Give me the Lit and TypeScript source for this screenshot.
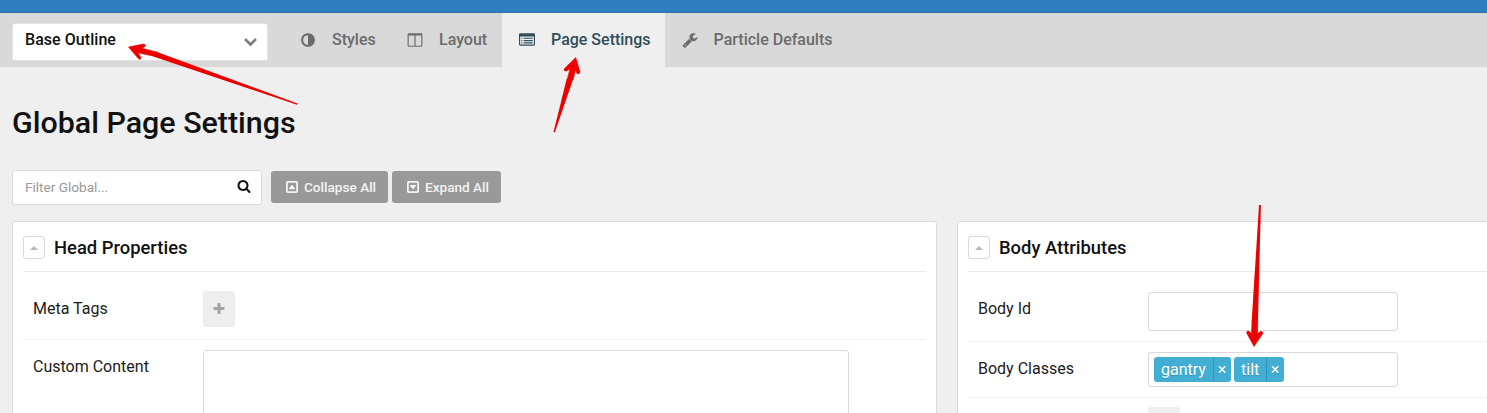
import { LitElement, html, css, svg } from "lit";
import { customElement, property } from "lit/decorators.js";

const GLYPHS: Record<string, string> = {
  adjust:
    "M896 1440v-1088q-148 0-273 73t-198 198-73 273 73 273 198 198 273 73zm768-544q0 209-103 385.5t-279.5 279.5-385.5 103-385.5-103-279.5-279.5-103-385.5 103-385.5 279.5-279.5 385.5-103 385.5 103 279.5 279.5 103 385.5z",
  columns:
    "M224 1536h608v-1152h-640v1120q0 13 9.5 22.5t22.5 9.5zm1376-32v-1120h-640v1152h608q13 0 22.5-9.5t9.5-22.5zm128-1216v1216q0 66-47 113t-113 47h-1344q-66 0-113-47t-47-113v-1216q0-66 47-113t113-47h1344q66 0 113 47t47 113z",
  list:
    "M384 1184v64q0 13-9.5 22.500t-22.500 9.500h-64q-13 0-22.500-9.500t-9.500-22.500v-64q0-13 9.500-22.500t22.500-9.500h64q13 0 22.500 9.500t9.500 22.500zm0-256v64q0 13-9.500 22.500t-22.500 9.500h-64q-13 0-22.500-9.500t-9.500-22.500v-64q0-13 9.500-22.500t22.500-9.500h64q13 0 22.500 9.500t9.500 22.500zm0-256v64q0 13-9.500 22.500t-22.500 9.500h-64q-13 0-22.500-9.500t-9.500-22.500v-64q0-13 9.500-22.500t22.500-9.500h64q13 0 22.500 9.500t9.500 22.500zm1152 512v64q0 13-9.500 22.500t-22.500 9.500h-960q-13 0-22.500-9.500t-9.500-22.500v-64q0-13 9.500-22.500t22.500-9.500h960q13 0 22.500 9.500t9.500 22.500zm0-256v64q0 13-9.500 22.500t-22.500 9.500h-960q-13 0-22.500-9.500t-9.500-22.500v-64q0-13 9.500-22.500t22.500-9.500h960q13 0 22.500 9.500t9.500 22.500zm0-256v64q0 13-9.500 22.500t-22.500 9.500h-960q-13 0-22.500-9.500t-9.500-22.500v-64q0-13 9.500-22.500t22.500-9.500h960q13 0 22.500 9.500t9.500 22.500zm128 704v-832q0-13-9.500-22.500t-22.500-9.500h-1472q-13 0-22.500 9.500t-9.500 22.500v832q0 13 9.500 22.500t22.500 9.500h1472q13 0 22.500-9.500t9.500-22.500zm128-1088v1088q0 66-47 113t-113 47h-1472q-66 0-113-47t-47-113v-1088q0-66 47-113t113-47h1472q66 0 113 47t47 113z",
  wrench:
    "M448 1472q0-26-19-45t-45-19-45 19-19 45 19 45 45 19 45-19 19-45zm644-420l-682 682q-37 37-90 37-52 0-91-37l-106-108q-38-36-38-90 0-53 38-91l681-681q39 98 114.5 173.500t173.500 114.500zm634-435q0 39-23 106-47 134-164.500 217.500t-258.500 83.500q-185 0-316.500-131.500t-131.500-316.500 131.500-316.500 316.500-131.500q58 0 121.500 16.500t107.500 46.500q16 11 16 28t-16 28l-293 169v224l193 107q5-3 79-48.500t135.500-81 70.500-35.500q15 0 23.500 10t8.500 25z",
  search:
    "M1216 832q0-185-131.500-316.500t-316.500-131.500-316.500 131.500-131.500 316.500 131.500 316.500 316.500 131.500 316.500-131.500 131.500-316.500zm512 832q0 52-38 90t-90 38q-54 0-90-38l-343-342q-179 124-399 124-143 0-273.500-55.500t-225-150-150-225-55.500-273.500 55.500-273.500 150-225 225-150 273.500-55.500 273.500 55.500 225 150 150 225 55.500 273.500q0 220-124 399l343 343q37 37 37 90z",
  plus:
    "M1600 736v192q0 40-28 68t-68 28h-416v416q0 40-28 68t-68 28h-192q-40 0-68-28t-28-68v-416h-416q-40 0-68-28t-28-68v-192q0-40 28-68t68-28h416v-416q0-40 28-68t68-28h192q40 0 68 28t28 68v416h416q40 0 68 28t28 68z",
  boxUp:
    "M1277 1129q-19 41-61 41h-640q-42 0-61-41-18-40 6-71l320-404q20-25 55-25t55 25l320 404q24 31 6 71zM350 128h1092q222 0 222 222v1092q0 222-222 222h-1092q-222 0-222-222v-1092q0-222 222-222zM410 350q-60 0-60 60v972q0 60 60 60h972q60 0 60-60v-972q0-60-60-60z",
  boxDown:
    "M515 673q19-41 61-41h640q42 0 61 41 18 40-6 71l-320 404q-20 25-55 25t-55-25l-320-404q-24-31-6-71zM350 128h1092q222 0 222 222v1092q0 222-222 222h-1092q-222 0-222-222v-1092q0-222 222-222zM410 350q-60 0-60 60v972q0 60 60 60h972q60 0 60-60v-972q0-60-60-60z",
};

@customElement("ui-icon")
class UiIcon extends LitElement {
  @property() name = "plus";
  static styles = css`
    :host { display: block; width: 16px; height: 16px; flex: none; }
    svg { display: block; width: 100%; height: 100%; fill: currentColor; fill-rule: evenodd; overflow: visible; }
  `;
  render() {
    return html`<svg viewBox="0 0 1792 1792">${svg`<path d=${GLYPHS[this.name]}></path>`}</svg>`;
  }
}

@customElement("settings-card")
class SettingsCard extends LitElement {
  @property() heading = "";
  static styles = css`
    :host { display: block; box-sizing: border-box; height: 300px; background: #fff; border: 1px solid #d9d9d9; border-radius: 3px; padding: 0 10px; }
    .head { display: flex; align-items: center; height: 50px; box-sizing: border-box; border-bottom: 1px solid #eaeaea; }
    .toggle { display: flex; align-items: center; justify-content: center; width: 22px; height: 23px; margin-top: 2px; box-sizing: border-box; border: 1px solid #d9d9d9; border-radius: 3px; }
    .tri { border: 4px solid transparent; border-top: 0; border-bottom-color: #b8b8b8; }
    h2 { margin: 3px 0 0 9px; font: 500 18.4px/24px Roboto, sans-serif; color: #111; white-space: nowrap; }
  `;
  render() {
    return html`<div class="head"><span class="toggle"><i class="tri"></i></span><h2>${this.heading}</h2></div><slot></slot>`;
  }
}

@customElement("app-root")
class AppRoot extends LitElement {
  static styles = css`
    :host { display: block; position: relative; width: 1487px; height: 413px; overflow: hidden; background: #efefef; font-family: Roboto, sans-serif; font-size: 16px; color: #111; }
    * { box-sizing: border-box; }
    .strip { height: 13px; background: #307dbf; border-bottom: 1px solid #2c72ae; }
    .bar { display: flex; height: 54px; background: #d9d9d9; padding-left: 12px; }
    .select { display: flex; justify-content: space-between; width: 256px; height: 38px; margin: 10px 17px 0 0; background: #fff; border: 1px solid #e3e3e3; border-radius: 3px; padding: 5px 10px 0 12px; font-weight: 500; line-height: 22px; letter-spacing: 0.05px; }
    .chev { width: 13px; height: 10px; margin-top: 7.5px; fill: none; stroke: #808080; stroke-width: 2.7; }
    .tab { display: flex; align-items: flex-start; padding-top: 17px; height: 54px; font-weight: 500; line-height: 20px; color: #6b6b6b; white-space: nowrap; }
    .tab ui-icon { margin-top: 1.5px; }
    .styles { width: 107px; padding-left: 15px; gap: 16px; }
    .layout { width: 110px; padding-left: 15px; gap: 16px; }
    .page { width: 163px; padding-left: 17px; gap: 16px; background: #efefef; color: #314d59; }
    .particle { padding-left: 16.5px; gap: 16px; }
    h1 { margin: 36px 0 0 12px; height: 40px; font: 500 30.4px/40px Roboto, sans-serif; color: #111; white-space: nowrap; }
    .tools { display: flex; height: 35px; margin: 27px 0 16px 12px; }
    .filter { display: flex; justify-content: space-between; width: 250px; padding: 9px 10px 0 12px; margin-right: 9px; background: #fff; border: 1px solid #d9d9d9; border-radius: 3px; color: #999; font-size: 13.6px; line-height: 15px; }
    .filter ui-icon { width: 14px; height: 14px; margin-top: -1px; color: #111; }
    .btn { display: flex; align-items: center; height: 32px; margin: 1px 4px 0 0; background: #999; border-radius: 3px; color: #f4f4f4; font-weight: 500; font-size: 13.6px; gap: 5px; padding-left: 14px; white-space: nowrap; }
    .btn ui-icon { width: 14px; height: 14px; }
    .collapse { width: 117px; }
    .expand { width: 109px; }
    .cards { display: grid; grid-template-columns: 925px 925px; column-gap: 20px; padding-left: 12px; }
    .row { display: flex; padding-left: 10px; border-bottom: 1px solid #f1f1f1; }
    .label { width: 170px; line-height: 20px; font-size: 16px; color: #1b1b1b; }
    .meta { height: 68px; padding-top: 19px; }
    .meta .label { padding-top: 8px; }
    .custom { padding-top: 10px; }
    .custom .label { padding-top: 7px; }
    .bid { height: 70px; padding-top: 20px; }
    .bid .label { padding-top: 7px; }
    .classes { height: 56px; padding-top: 10px; }
    .classes .label { padding-top: 7px; }
    .next { padding: 9px 0 0 180px; }
    .add { display: flex; align-items: center; justify-content: center; width: 32px; height: 36px; background: #eee; border-radius: 3px; color: #a3a3a3; }
    .add ui-icon { width: 14px; height: 14px; }
    .area { width: 646px; height: 100px; border: 1px solid #d9d9d9; border-radius: 3px; }
    .input { display: flex; gap: 3px; width: 250px; border: 1px solid #d9d9d9; border-radius: 3px; }
    .single { height: 39px; }
    .multi { height: 35px; padding: 4px 0 0 5px; }
    .tag { display: flex; height: 25px; background: #43aed4; border-radius: 3px; color: #fff; line-height: 26px; text-shadow: 0 1px 0 rgba(0, 51, 83, 0.25); }
    .tag b { font-weight: 400; padding-left: 7px; }
    .tag i { font-style: normal; border-left: 1px solid #3293b8; width: 18px; padding-right: 1px; text-align: center; font-size: 16px; line-height: 26px; }
    .gantry b { width: 59px; }
    .tilt b { width: 32px; }
    .arrows { position: absolute; left: 0; top: 0; width: 1487px; height: 413px; fill: #ec0000; pointer-events: none; }
    .heads { stroke: #ec0000; stroke-width: 0.6; stroke-linejoin: round; }
  `;
  render() {
    return html`
      <div class="strip"></div>
      <nav class="bar">
        <div class="select"><span>Base Outline</span><svg class="chev" viewBox="0 0 13 10"><path d="M1 2L6.500 7.500L12 2"></path></svg></div>
        <div class="tab styles"><ui-icon name="adjust"></ui-icon><span>Styles</span></div>
        <div class="tab layout"><ui-icon name="columns"></ui-icon><span>Layout</span></div>
        <div class="tab page"><ui-icon name="list"></ui-icon><span>Page Settings</span></div>
        <div class="tab particle"><ui-icon name="wrench"></ui-icon><span>Particle Defaults</span></div>
      </nav>
      <h1>Global Page Settings</h1>
      <div class="tools">
        <div class="filter"><span>Filter Global...</span><ui-icon name="search"></ui-icon></div>
        <div class="btn collapse"><ui-icon name="boxUp"></ui-icon><span>Collapse All</span></div>
        <div class="btn expand"><ui-icon name="boxDown"></ui-icon><span>Expand All</span></div>
      </div>
      <div class="cards">
        <settings-card heading="Head Properties">
          <div class="row meta"><span class="label">Meta Tags</span><span class="add"><ui-icon name="plus"></ui-icon></span></div>
          <div class="row custom"><span class="label">Custom Content</span><span class="area"></span></div>
        </settings-card>
        <settings-card heading="Body Attributes">
          <div class="row bid"><span class="label">Body Id</span><span class="input single"></span></div>
          <div class="row classes"><span class="label">Body Classes</span>
            <span class="input multi"><span class="tag gantry"><b>gantry</b><i>×</i></span><span class="tag tilt"><b>tilt</b><i>×</i></span></span>
          </div>
          <div class="next"><div class="add"></div></div>
        </settings-card>
      </div>
      <svg class="arrows" viewBox="0 0 1487 413">
        <g class="heads">
          <path d="M128.500 47L143.500 44Q146 44.200 145 46.500L142 48.300L157 52L155 56.500L138 52.800L141 57.800Q141 60.300 138.500 58.800Z"></path>
          <path d="M575.800 57.500L580 72Q579 75 577 73.500L575.500 70L573 80L567 80L570 69L566.500 71Q563.500 71.500 564.300 68.700Z"></path>
          <path d="M1254 346.500L1246.700 333Q1246.500 330.500 1249 331.200L1251.500 333.500L1252 320L1257.800 320L1257.500 333.500L1260.500 331.500Q1263.200 331 1262.800 333.500Z"></path>
        </g>
        <path d="M155 51.300L297.500 103.500L297 104.700L154 56.800Z"></path>
        <path d="M573.200 79L554.800 132.500L553.500 132L566.700 79Z"></path>
        <path d="M1251.700 321L1259 205L1260.900 205L1258 321Z"></path>
      </svg>
    `;
  }
}
